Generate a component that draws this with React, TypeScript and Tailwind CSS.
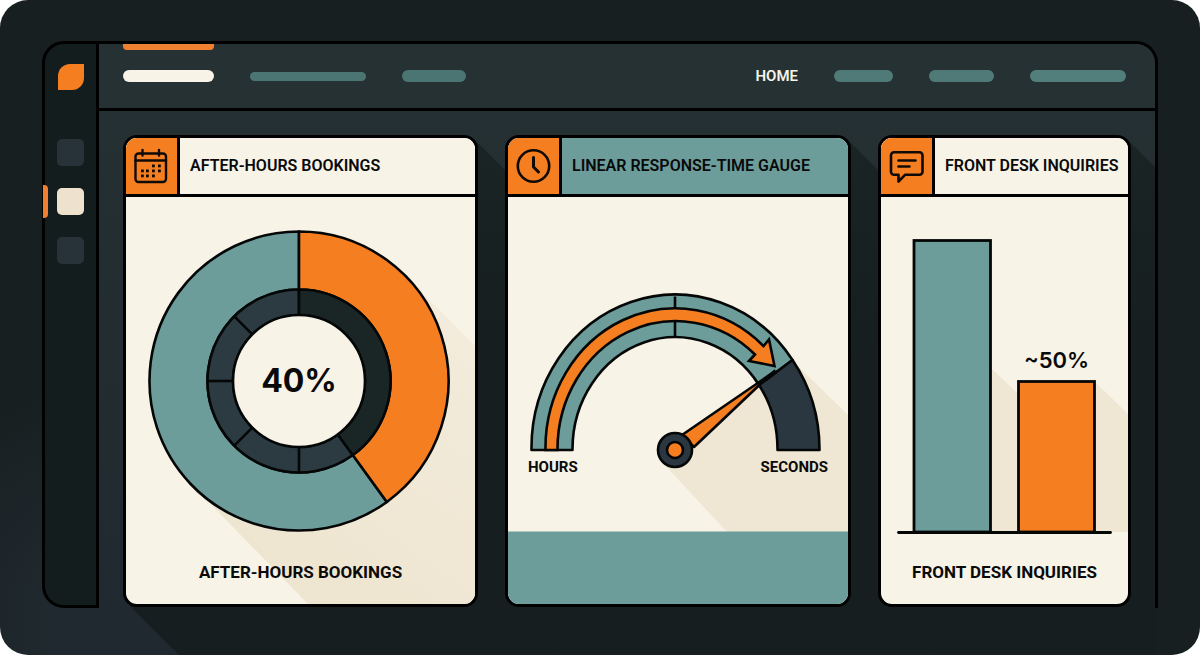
import type { ReactNode } from 'react';

type CardProps = {
  title: string;
  icon: ReactNode;
  headerClass?: string;
  children: ReactNode;
};

const NAV_LEFT = [
  { label: 'Dashboard', className: 'h-3 w-[91px] bg-[#f7f3e7]' },
  { label: 'Analytics', className: 'h-[9px] w-[116px] bg-[#4b7573]' },
  { label: 'Reports', className: 'h-3 w-16 bg-[#4b7573]' },
];

const NAV_RIGHT = [
  { label: 'Team', className: 'h-3 w-[59px] bg-[#4f7a78]' },
  { label: 'Settings', className: 'h-3 w-[65px] bg-[#4f7a78]' },
  { label: 'Account', className: 'h-3 w-24 bg-[#527e7b]' },
];

const SIDE_ITEMS = [
  { label: 'Overview', active: false },
  { label: 'Bookings', active: true },
  { label: 'Messages', active: false },
];

const DONUT = { cx: 173, cy: 184, outer: 149.5, mid: 91.5, inner: 66 };

// 0deg is twelve o'clock, clockwise
function polar(radius: number, deg: number) {
  const a = (deg * Math.PI) / 180;
  return `${(DONUT.cx + radius * Math.sin(a)).toFixed(2)} ${(DONUT.cy - radius * Math.cos(a)).toFixed(2)}`;
}

function slice(from: number, to: number, r1: number, r2: number) {
  const large = to - from > 180 ? 1 : 0;
  return `M${polar(r1, from)} A${r1} ${r1} 0 ${large} 1 ${polar(r1, to)} L${polar(r2, to)} A${r2} ${r2} 0 ${large} 0 ${polar(r2, from)} Z`;
}

function CalendarIcon() {
  const dots = [
    [20, 17], [26, 17],
    [9, 22], [14, 22], [20, 22], [26, 22],
    [9, 27], [14, 27], [20, 27],
  ];
  return (
    <svg viewBox="1 0 36 36" className="size-9" fill="none" stroke="#100a06" strokeWidth="2.4" strokeLinecap="round">
      <rect x="2.5" y="5.5" width="30.5" height="28.5" rx="3" />
      <path d="M2.5 12.5H33M9.5 2v5.5M26 2v5.5" />
      {dots.map(([x, y]) => (
        <rect key={`${x}-${y}`} x={x - 1} y={y - 0.5} width="2.8" height="2.8" fill="#100a06" stroke="none" />
      ))}
    </svg>
  );
}

function ClockIcon() {
  return (
    <svg viewBox="0 0 36 36" className="size-9" fill="none" stroke="#100a06" strokeWidth="2.6" strokeLinecap="round" strokeLinejoin="round">
      <circle cx="17.5" cy="18" r="15.7" />
      <path d="M17.5 9.5v9.5l5 5" strokeWidth="3" />
    </svg>
  );
}

function ChatIcon() {
  return (
    <svg viewBox="0 0 36 36" className="size-9" fill="none" stroke="#100a06" strokeWidth="2.6" strokeLinecap="round" strokeLinejoin="round">
      <path d="M5 4.3h25.5a3 3 0 0 1 3 3v16.5a3 3 0 0 1-3 3H16L9.5 33.5v-6.7H5a3 3 0 0 1-3-3V7.3a3 3 0 0 1 3-3z" />
      <path d="M9.5 12.5h17M9.5 18.5h11" />
    </svg>
  );
}

function Card({ title, icon, headerClass = 'bg-[#f7f3e7]', children }: CardProps) {
  return (
    <section className="relative flex min-w-0">
      <div className="absolute top-1 left-1 -right-20 -bottom-20 bg-linear-to-b from-[#1a2425] to-[#161e1f] to-40% [clip-path:polygon(calc(100%-84px)_0,100%_84px,100%_100%,84px_100%,0_calc(100%-84px))]" />
      <div className="relative z-10 flex min-w-0 flex-1 flex-col overflow-hidden rounded-[14px] border-3 border-black bg-[#f7f3e7]">
        <header className={`flex h-[59px] shrink-0 border-b-3 border-black ${headerClass}`}>
          <div className="flex w-[54px] shrink-0 items-center justify-center border-r-3 border-black bg-[#f57e20]">{icon}</div>
          <h2 className="self-center pl-[10px] text-base font-semibold whitespace-nowrap">{title}</h2>
        </header>
        <div className="grid flex-1 grid-rows-1">{children}</div>
      </div>
    </section>
  );
}

function Caption({ children }: { children: ReactNode }) {
  return <p className="self-end pb-5 text-center text-[17px] leading-6 font-bold [grid-area:1/1]">{children}</p>;
}

function DonutChart() {
  const { outer, mid, inner, cx, cy } = DONUT;
  return (
    <svg viewBox="0 0 349 407" preserveAspectRatio="xMidYMid slice" className="h-full w-full [grid-area:1/1]" role="img" aria-label="40% after-hours bookings">
      <defs>
        <linearGradient id="donutShade" x1="1" y1="0" x2="0.4" y2="1">
          <stop offset="0" stopColor="#f4ecdd" />
          <stop offset="1" stopColor="#eee5d0" />
        </linearGradient>
      </defs>
      <path d="M278 77L349 149V407H182L67 289Z" fill="url(#donutShade)" />
      <g stroke="#050707" strokeWidth="2.6" strokeLinejoin="round">
        <path d={slice(144, 360, outer, mid)} fill="#6c9d9b" />
        <path d={slice(0, 144, outer, mid)} fill="#f57e20" />
        <path d={slice(144, 360, mid, inner)} fill="#2c3a42" />
        <path d={slice(0, 144, mid, inner)} fill="#1a2526" />
        <circle cx={cx} cy={cy} r={inner} fill="#f7f3e7" />
        {[180, 225, 270, 315].map((deg) => (
          <path key={deg} d={`M${polar(mid, deg)} L${polar(inner, deg)}`} />
        ))}
      </g>
      <text x={cx} y="195" textAnchor="middle" className="fill-[#0a0a0a] font-['Inter',sans-serif] text-[32px] font-bold">40%</text>
    </svg>
  );
}

function ResponseGauge() {
  return (
    <svg viewBox="0 0 340 407" preserveAspectRatio="xMidYMid slice" className="h-full w-full [grid-area:1/1]" role="img" aria-label="Response time, hours to seconds">
      <path d="M155 266L267 172L292 171L340 218V335H219Z" fill="#efe6d3" />
      <rect y="334.5" width="340" height="73" fill="#6c9d9b" />
      <g stroke="#050707" strokeWidth="2.6" strokeLinejoin="round">
        <path d="M23.5 253A143.5 153.5 0 0 1 284.5 163L251 188A102.5 112 0 0 0 64.5 253Z" fill="#6c9d9b" />
        <path d="M284.5 163A143.5 153.5 0 0 1 311.5 253H269.5A102.5 112 0 0 0 251 188Z" fill="#2a3740" />
        <path d="M167 99.5V141" />
        <path d="M37.5 253A129.5 139.5 0 0 1 255.5 149L261 142.5L266.5 169L241 164L247 157.5A118 128 0 0 0 49.5 253Z" fill="#f57e20" strokeLinejoin="miter" />
        <path d="M258 182L268 174" strokeWidth="4.5" />
        <path d="M174 238L263 177L186 250Z" fill="#f57e20" />
        <circle cx="167" cy="253" r="17" fill="#2a3740" />
        <circle cx="167" cy="253" r="8" fill="#f57e20" />
      </g>
      <g className="fill-[#0a0a0a] text-[15px] font-bold">
        <text x="20" y="275">HOURS</text>
        <text x="320" y="275" textAnchor="end">SECONDS</text>
      </g>
    </svg>
  );
}

function InquiryBars() {
  return (
    <svg viewBox="0 0 247 407" preserveAspectRatio="xMidYMid slice" className="h-full w-full [grid-area:1/1]" role="img" aria-label="Front desk inquiries, about 50%">
      <path d="M110 171L137 197V335H110ZM214 185L247 217V335H214Z" fill="#efe6d3" />
      <g stroke="#050707" strokeWidth="2.8">
        <rect x="33" y="43.5" width="76.5" height="291.5" fill="#6c9d9b" />
        <rect x="137.5" y="184.5" width="76" height="150.5" fill="#f57e20" />
        <path d="M17.5 335.5H229.5" strokeLinecap="round" />
      </g>
      <text x="175.5" y="171" textAnchor="middle" className="fill-[#0a0a0a] font-['Inter',sans-serif] text-[22px] font-semibold">~50%</text>
    </svg>
  );
}

function Sidebar() {
  return (
    <aside className="flex w-[57px] shrink-0 flex-col items-center rounded-l-[22px] border-3 border-black bg-[#141d1e] pt-5">
      <a href="#home" aria-label="Home" className="size-[26px] rounded-tl-[12px] rounded-br-[12px] bg-[#f57e20]" />
      <nav className="mt-[49px] flex w-full flex-col items-center gap-[22px]">
        {SIDE_ITEMS.map((item) => (
          <div key={item.label} className="relative flex w-full justify-center">
            {item.active ? <span className="absolute top-[-3px] left-[-2px] h-[33px] w-[5px] rounded-r-sm bg-[#f08030]" /> : null}
            <button aria-label={item.label} className={`size-[27px] rounded-[5px] ${item.active ? 'bg-[#eee2ce]' : 'bg-[#283339]'}`} />
          </div>
        ))}
      </nav>
    </aside>
  );
}

function TopBar() {
  return (
    <header className="relative flex h-[67px] shrink-0 items-center justify-between rounded-tr-[19px] border-b-3 border-black bg-[#263134] pr-[29px] pl-6">
      <span className="absolute top-0 left-6 h-[6px] w-[91px] rounded-b-sm bg-[#f08030]" />
      <nav className="flex items-center gap-9">
        {NAV_LEFT.map((item) => (
          <a key={item.label} href="#" aria-label={item.label} className={`rounded-full ${item.className}`} />
        ))}
      </nav>
      <nav className="flex items-center gap-9">
        <a href="#home" className="text-[15px] leading-5 font-semibold text-[#f7f3e7]">HOME</a>
        {NAV_RIGHT.map((item) => (
          <a key={item.label} href="#" aria-label={item.label} className={`rounded-full ${item.className}`} />
        ))}
      </nav>
    </header>
  );
}

export default function App() {
  return (
    <div className="bg-white font-['Roboto',sans-serif] text-[#0a0a0a]">
      <div className="flex min-h-screen overflow-hidden rounded-[28px] bg-[#171f20] bg-[radial-gradient(circle_at_110px_620px,#20292f_0,#20292f_60px,#171f20_240px)] px-[42px] pt-[41px] pb-[47px]">
        <Sidebar />
        <div className="flex min-w-0 flex-1 flex-col rounded-tr-[22px] border-t-3 border-r-3 border-black">
          <TopBar />
          <main className="grid flex-1 grid-cols-[355fr_346fr_253fr] gap-[27px] overflow-x-clip bg-linear-to-b from-[#253033] to-[#20292f] px-6 pt-6 pb-px">
            <Card title="AFTER-HOURS BOOKINGS" icon={<CalendarIcon />}>
              <DonutChart />
              <Caption>AFTER-HOURS BOOKINGS</Caption>
            </Card>
            <Card title="LINEAR RESPONSE-TIME GAUGE" icon={<ClockIcon />} headerClass="bg-[#6c9d9b]">
              <ResponseGauge />
            </Card>
            <Card title="FRONT DESK INQUIRIES" icon={<ChatIcon />}>
              <InquiryBars />
              <Caption>FRONT DESK INQUIRIES</Caption>
            </Card>
          </main>
        </div>
      </div>
    </div>
  );
}
